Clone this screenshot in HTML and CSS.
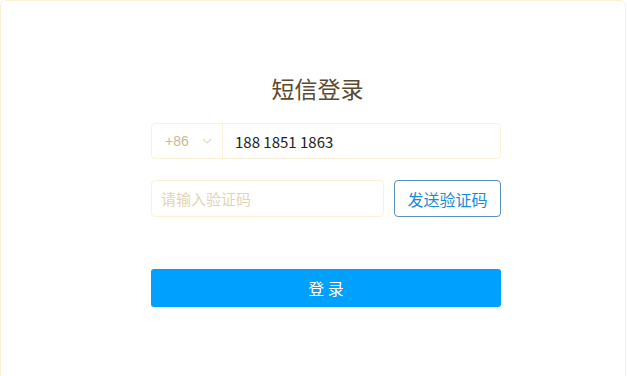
FILE: index.html
```html
<!DOCTYPE html>
<html lang="zh-CN">
<head>
  <meta charset="UTF-8">
  <meta name="viewport" content="width=device-width, initial-scale=1.0">
  <title>短信登录</title>
  <link rel="stylesheet" href="styles.css">
</head>
<body>
  <div class="card">
    <h1 class="title">短信登录</h1>

    <form class="login-form">
      <div class="phone-row">
        <div class="area-code">
          <span>+86</span>
          <svg class="chevron" width="10" height="6" viewBox="0 0 10 6">
            <path d="M1 1l4 4 4-4" fill="none" stroke="#e6dcc4" stroke-width="1.2"/>
          </svg>
        </div>
        <input type="text" class="phone-input" value="188 1851 1863">
      </div>

      <div class="code-row">
        <input type="text" class="code-input" placeholder="请输入验证码">
        <button type="button" class="send-btn">发送验证码</button>
      </div>

      <button type="submit" class="submit-btn">登 录</button>
    </form>
  </div>
</body>
</html>
```

FILE: styles.css
```css
html, body {
  height: 100%;
  overflow: hidden;
}

body {
  margin: 0;
  padding: 0;
  background: #fff;
  font-family: "Noto Sans CJK SC", "Liberation Sans", sans-serif;
}

.card {
  width: 626px;
  height: 100%;
  border: 1px solid #fbf2d6;
  border-bottom: none;
  border-radius: 6px 6px 0 0;
  box-sizing: border-box;
}

.title {
  margin: 0;
  padding: 69px 0 0 9px;
  height: 53px;
  text-align: center;
  font-size: 23px;
  font-weight: normal;
  line-height: 36px;
  color: #5a4a2f;
}

.login-form {
  width: 350px;
  margin-left: 150px;
}

.phone-row {
  display: flex;
  height: 36px;
  border: 1px solid #fbf2d8;
  border-radius: 4px;
  box-sizing: border-box;
}

.area-code {
  width: 71px;
  display: flex;
  align-items: center;
  justify-content: space-between;
  padding: 0 10px 0 13px;
  box-sizing: border-box;
  border-right: 1px solid #fbf2d8;
  font-family: "Liberation Sans", sans-serif;
  font-size: 14px;
  color: #c9b894;
}

.phone-input {
  flex: 1;
  border: none;
  outline: none;
  padding: 0 12px;
  font-family: "Noto Sans CJK SC", "Liberation Sans", sans-serif;
  font-size: 15px;
  color: #222;
  background: transparent;
}

.code-row {
  display: flex;
  gap: 10px;
  margin-top: 21px;
}

.code-input {
  width: 233px;
  height: 37px;
  border: 1px solid #fbf2d8;
  border-radius: 4px;
  box-sizing: border-box;
  padding: 0 9px;
  outline: none;
  font-family: "Noto Sans CJK SC", sans-serif;
  font-size: 15px;
}

.code-input::placeholder {
  color: #e3d5b4;
}

.send-btn {
  flex: 1;
  height: 37px;
  border: 1px solid #5f8fbd;
  border-radius: 4px;
  background: #fff;
  color: #1b8ad6;
  font-family: "Noto Sans CJK SC", sans-serif;
  font-size: 16px;
  cursor: pointer;
}

.submit-btn {
  display: block;
  width: 100%;
  height: 38px;
  margin-top: 52px;
  border: none;
  border-radius: 3px;
  background: #00a0fe;
  color: #fff;
  font-family: "Noto Sans CJK SC", sans-serif;
  font-size: 16px;
  cursor: pointer;
}
```
